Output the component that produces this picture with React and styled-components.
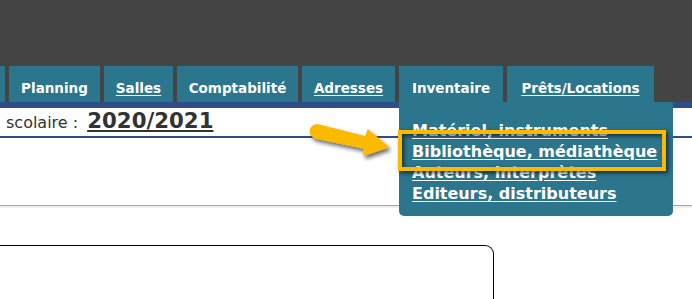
import React from 'react';
import styled, { createGlobalStyle } from 'styled-components';

const TEAL = '#2b758d';
const DARK = '#444444';
const NAVY = '#2f4d88';
const AMBER = '#fbb900';

const GlobalStyle = createGlobalStyle`
  body {
    margin: 0;
    background: #fff;
    font-family: "DejaVu Sans", Verdana, sans-serif;
    overflow: hidden;
  }
`

const Page = styled.div`
  width: 692px;
  height: 299px;
  overflow: hidden;
`

const TopBar = styled.div`
  height: 66px;
  background: ${DARK};
`

const TabBar = styled.nav`
  display: flex;
  gap: 4px;
  height: 36px;
  background: ${DARK};
  border-bottom: 6px solid ${NAVY};
`

const Tab = styled.a`
  position: relative;
  display: flex;
  justify-content: center;
  align-items: flex-start;
  flex: none;
  box-sizing: border-box;
  width: ${props => props.$width}px;
  height: 36px;
  padding-top: 14px;
  background: ${TEAL};
  color: #fff;
  font-size: 13.5px;
  font-weight: bold;
  white-space: nowrap;
  text-decoration: ${props => (props.$link ? 'underline' : 'none')};
  text-underline-offset: 2px;
`

const Dropdown = styled.div`
  position: absolute;
  top: 36px;
  left: 0;
  z-index: 5;
  width: 274px;
  box-sizing: border-box;
  padding: 18px 13px 12px;
  background: ${TEAL};
  border-radius: 0 0 5px 5px;
  text-align: left;
`

const MenuItem = styled.a`
  display: block;
  color: #fff;
  font-size: 16px;
  font-weight: bold;
  line-height: 21px;
  text-decoration: underline;
  text-underline-offset: 2px;
  white-space: nowrap;
`

const Highlight = styled.div`
  position: absolute;
  left: -1px;
  top: 28px;
  width: 268px;
  height: 41px;
  box-sizing: border-box;
  border: 4px solid ${AMBER};
  box-shadow: 2px 2px 4px rgba(0, 0, 0, 0.65), inset 2px 2px 4px rgba(0, 0, 0, 0.6);
`

const Arrow = styled.svg`
  position: absolute;
  left: -99px;
  top: 13px;
  overflow: visible;
`

const YearRow = styled.div`
  height: 28px;
  padding-left: 6px;
  border-bottom: 2px solid ${NAVY};
  color: #333;
  font-size: 16px;
  white-space: nowrap;
`

const Year = styled.a`
  margin-left: 9px;
  font-size: 21.3px;
  font-weight: bold;
  color: #333;
  text-decoration: underline;
  text-decoration-thickness: 2px;
  text-underline-offset: 2px;
`

const Divider = styled.div`
  margin-top: 67px;
  height: 1px;
  background: #a3a3a3;
  border-bottom: 2px solid #efefef;
`

const Panel = styled.div`
  margin-top: 37px;
  width: 494px;
  height: 80px;
  box-sizing: border-box;
  border: 1px solid #000;
  border-left: none;
  border-bottom: none;
  border-top-right-radius: 9px;
`

const tabs = [
  { label: 'Planning', width: 91 },
  { label: 'Salles', width: 69, link: true },
  { label: 'Comptabilité', width: 121 },
  { label: 'Adresses', width: 93, link: true },
]

const menu = [
  'Matériel, instruments',
  'Bibliothèque, médiathèque',
  'Auteurs, interprètes',
  'Editeurs, distributeurs',
]

const App = () => (
  <Page>
    <GlobalStyle />
    <TopBar />
    <TabBar>
      <Tab $width={5} />
      {tabs.map(t => (
        <Tab key={t.label} $width={t.width} $link={t.link}>{t.label}</Tab>
      ))}
      <Tab $width={104}>
        Inventaire
        <Dropdown>
          {menu.map(m => (
            <MenuItem key={m}>{m}</MenuItem>
          ))}
          <Arrow width="100" height="50" viewBox="0 0 100 50">
            <defs>
              <filter id="sh" x="-20%" y="-30%" width="150%" height="180%">
                <feDropShadow dx="2" dy="3" stdDeviation="2" floodColor="#000" floodOpacity="0.6" />
              </filter>
            </defs>
            <path
              d="M18 10 L66 22 L68 15 L88 32 L64 40 L64 33 L16 23 A6.5 6.5 0 0 1 18 10 Z"
              fill={AMBER}
              stroke={AMBER}
              strokeWidth="1.5"
              strokeLinejoin="round"
              filter="url(#sh)"
            />
          </Arrow>
          <Highlight />
        </Dropdown>
      </Tab>
      <Tab $width={147} $link>Prêts/Locations</Tab>
    </TabBar>
    <YearRow>
      scolaire :<Year>2020/2021</Year>
    </YearRow>
    <Divider />
    <Panel />
  </Page>
);

export default App;
